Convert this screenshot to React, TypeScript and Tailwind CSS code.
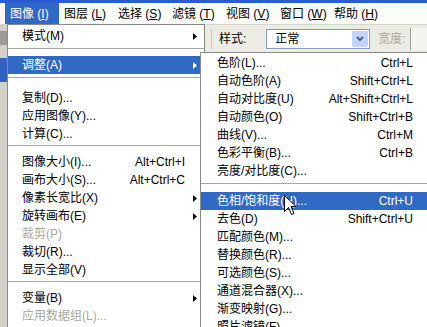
import React from "react";

type Row =
  | { kind: "item"; label: string; shortcut?: string; sub?: boolean; disabled?: boolean; active?: boolean }
  | { kind: "sep"; h: number; off: number };

const FONT = { fontFamily: '"Liberation Sans", "Noto Sans CJK SC", sans-serif' };

const mainRows: Row[] = [
  { kind: "item", label: "模式(M)", sub: true },
  { kind: "sep", h: 8, off: 3 },
  { kind: "item", label: "调整(A)", sub: true, active: true },
  { kind: "sep", h: 12, off: 3 },
  { kind: "item", label: "复制(D)..." },
  { kind: "item", label: "应用图像(Y)..." },
  { kind: "item", label: "计算(C)..." },
  { kind: "sep", h: 8, off: 2 },
  { kind: "item", label: "图像大小(I)...", shortcut: "Alt+Ctrl+I" },
  { kind: "item", label: "画布大小(S)...", shortcut: "Alt+Ctrl+C" },
  { kind: "item", label: "像素长宽比(X)", sub: true },
  { kind: "item", label: "旋转画布(E)", sub: true },
  { kind: "item", label: "裁剪(P)", disabled: true },
  { kind: "item", label: "裁切(R)..." },
  { kind: "item", label: "显示全部(V)" },
  { kind: "sep", h: 8, off: 2 },
  { kind: "item", label: "变量(B)", sub: true },
  { kind: "item", label: "应用数据组(L)...", disabled: true },
  { kind: "sep", h: 8, off: 2 },
];

const subRows: Row[] = [
  { kind: "item", label: "色阶(L)...", shortcut: "Ctrl+L" },
  { kind: "item", label: "自动色阶(A)", shortcut: "Shift+Ctrl+L" },
  { kind: "item", label: "自动对比度(U)", shortcut: "Alt+Shift+Ctrl+L" },
  { kind: "item", label: "自动颜色(O)", shortcut: "Shift+Ctrl+B" },
  { kind: "item", label: "曲线(V)...", shortcut: "Ctrl+M" },
  { kind: "item", label: "色彩平衡(B)...", shortcut: "Ctrl+B" },
  { kind: "item", label: "亮度/对比度(C)..." },
  { kind: "sep", h: 9, off: 3 },
  { kind: "item", label: "色相/饱和度(H)...", shortcut: "Ctrl+U", active: true },
  { kind: "item", label: "去色(D)", shortcut: "Shift+Ctrl+U" },
  { kind: "item", label: "匹配颜色(M)..." },
  { kind: "item", label: "替换颜色(R)..." },
  { kind: "item", label: "可选颜色(S)..." },
  { kind: "item", label: "通道混合器(X)..." },
  { kind: "item", label: "渐变映射(G)..." },
  { kind: "item", label: "照片滤镜(F)..." },
];

function Arrow({ white }: { white?: boolean }) {
  return (
    <svg width="4" height="7" viewBox="0 0 4 7" className="block">
      <path d="M0 0 L4 3.5 L0 7 Z" fill={white ? "#ffffff" : "#000000"} />
    </svg>
  );
}

function Sep({ h, off }: { h: number; off: number }) {
  return (
    <div style={{ height: h }} className="w-full">
      <div style={{ marginTop: off }} className="h-px w-full bg-[#a7a6a0]" />
    </div>
  );
}

function MainMenu() {
  return (
    <div
      className="absolute left-[7px] top-[24px] w-[198px] h-[330px] bg-white border border-[#8a8a8a] pt-[2px] text-[12px] leading-none"
      style={FONT}
    >
      {mainRows.map((r, i) =>
        r.kind === "sep" ? (
          <Sep key={i} h={r.h} off={r.off} />
        ) : (
          <div
            key={i}
            className={
              "h-[18px] flex items-center pl-[14px] pr-[7px] " +
              (r.active ? "bg-[#316ac5] text-white" : r.disabled ? "text-[#aca899]" : "text-black")
            }
          >
            <span className="flex-1 whitespace-nowrap">{r.label}</span>
            {r.shortcut && <span className="mr-[4px] whitespace-nowrap">{r.shortcut}</span>}
            <span className="w-[8px] flex justify-end">{r.sub && <Arrow white={r.active} />}</span>
          </div>
        )
      )}
    </div>
  );
}

function SubMenu() {
  return (
    <div
      className="absolute left-[200px] top-[52px] w-[236px] h-[300px] bg-white border border-[#8a8a8a] pt-px text-[12px] leading-none"
      style={FONT}
    >
      {subRows.map((r, i) =>
        r.kind === "sep" ? (
          <Sep key={i} h={r.h} off={r.off} />
        ) : (
          <div
            key={i}
            className={
              "h-[18px] flex items-center pl-[16px] pr-[22px] " +
              (r.active ? "bg-[#316ac5] text-white" : "text-black")
            }
          >
            <span className="flex-1 whitespace-nowrap">{r.label}</span>
            {r.shortcut && <span className="whitespace-nowrap">{r.shortcut}</span>}
          </div>
        )
      )}
    </div>
  );
}

const menuBar: { name: string; key: string }[] = [
  { name: "图像", key: "I" },
  { name: "图层", key: "L" },
  { name: "选择", key: "S" },
  { name: "滤镜", key: "T" },
  { name: "视图", key: "V" },
  { name: "窗口", key: "W" },
  { name: "帮助", key: "H" },
];

function Cursor() {
  return (
    <svg width="13" height="21" viewBox="0 0 13 21" className="absolute left-[284px] top-[195px]">
      <path
        d="M0.5 0.5 L0.5 16.5 L4.5 12.5 L7.5 19.5 L10 18.5 L7 11.5 L12 11.5 Z"
        fill="#ffffff"
        stroke="#000000"
        strokeWidth="1"
        strokeLinejoin="miter"
      />
    </svg>
  );
}

export default function App() {
  return (
    <div className="relative w-[427px] h-[327px] overflow-hidden bg-[#808080] flex flex-col" style={FONT}>
      {/* title bar tail */}
      <div className="h-[3px] bg-[#2a5bd0] shrink-0" />
      {/* menu bar */}
      <div className="h-[21px] shrink-0 bg-[#fbfbf8] flex items-stretch pl-[5px] text-[12px] leading-none">
        {menuBar.map((m, i) => (
          <div
            key={m.name}
            className={
              "w-[54px] flex items-center pl-[5px] whitespace-nowrap " +
              (i === 0 ? "bg-[#316ac5] text-white w-[53px]" : "text-black")
            }
          >
            {m.name} (<span className="underline">{m.key}</span>)
          </div>
        ))}
      </div>
      {/* options bar */}
      <div className="h-[28px] shrink-0 bg-[#ecebe4] border-t border-[#d8d6cc] flex items-center text-[12px] leading-none">
        <div className="w-[7px] h-full flex flex-col bg-[#d4d0c8]">
          <div className="mt-[6px] h-[14px] bg-[#9c9a94]" />
        </div>
        <div className="w-[204px]" />
        <div className="w-px h-[20px] bg-[#c8c6bc]" />
        <span className="ml-[7px] text-black">样式:</span>
        <div className="ml-[20px] w-[104px] h-[20px] bg-white border border-[#7f9db9] flex items-center">
          <span className="flex-1 pl-[8px] text-black">正常</span>
          <div className="w-[16px] h-[16px] mr-px bg-[#c3d3fd] rounded-[2px] flex items-center justify-center">
            <svg width="8" height="6" viewBox="0 0 8 6">
              <path d="M1 1 L4 4 L7 1" stroke="#4d6185" strokeWidth="2" fill="none" />
            </svg>
          </div>
        </div>
        <span className="ml-[8px] text-[#aca899]">宽度:</span>
        <div className="ml-[4px] w-px h-[22px] bg-[#9e9c94]" />
        <div className="flex-1 h-[22px] bg-[#f4f3ee]" />
      </div>
      {/* workspace */}
      <div className="flex-1 flex">
        <div className="w-[7px] bg-[#d4d0c8] flex flex-col">
          <div className="mt-[6px] h-[24px] bg-[#2f64c4]" />
        </div>
        <div className="flex-1 bg-[#c0c0c0]" />
      </div>

      <MainMenu />
      <SubMenu />
      <Cursor />
    </div>
  );
}
